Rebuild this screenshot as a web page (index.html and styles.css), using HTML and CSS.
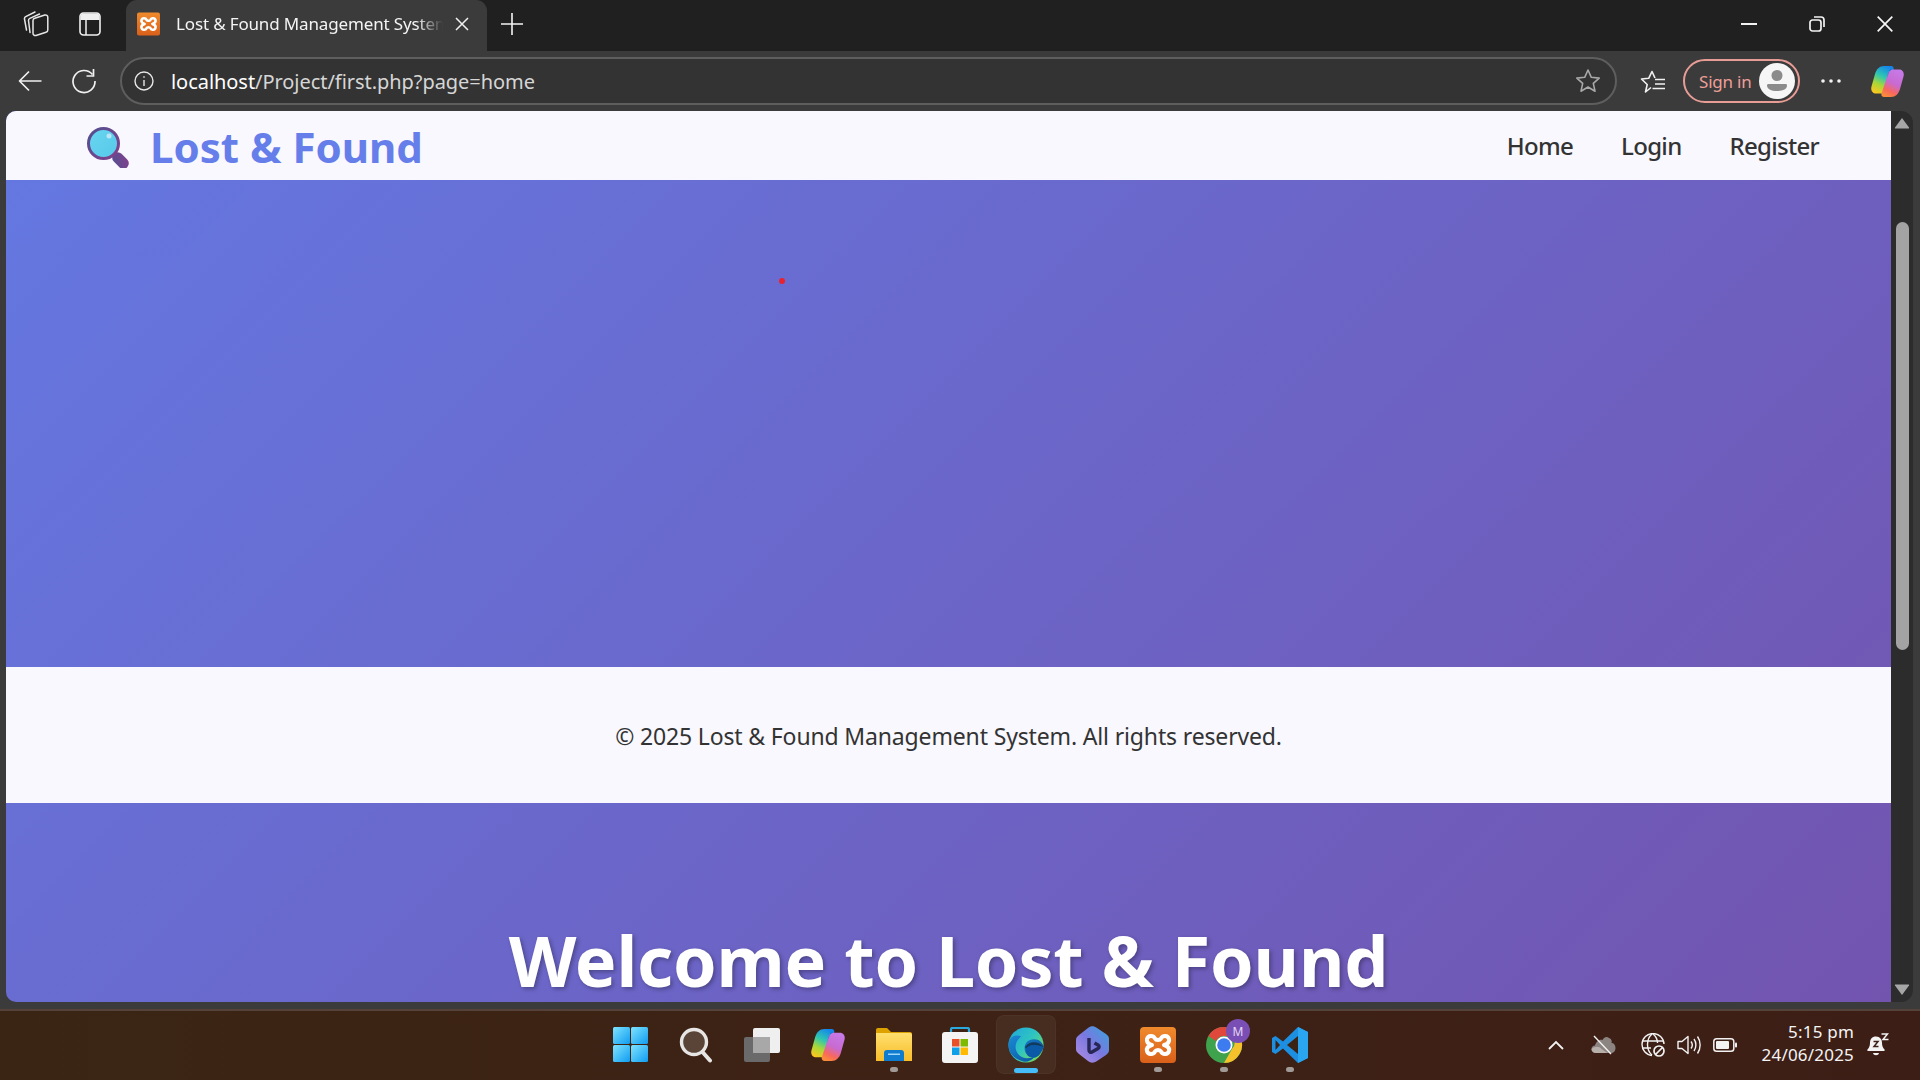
FILE: index.html
```html
<!DOCTYPE html>
<html lang="en">
<head>
<meta charset="utf-8">
<title>Lost &amp; Found Management System</title>
<link rel="stylesheet" href="styles.css">
</head>
<body>
<svg class="defs" width="0" height="0" aria-hidden="true">
  <defs>
    <linearGradient id="gXampp" x1="0" y1="0" x2="0" y2="1"><stop offset="0" stop-color="#f08a2c"/><stop offset="1" stop-color="#d9601a"/></linearGradient>
    <linearGradient id="gWin" x1="0" y1="0" x2="1" y2="1"><stop offset="0" stop-color="#7fe4ff"/><stop offset="1" stop-color="#0f9cf0"/></linearGradient>
    <linearGradient id="gCopA" x1=".7" y1="0" x2=".3" y2="1"><stop offset="0" stop-color="#1585ec"/><stop offset=".4" stop-color="#2fc8b0"/><stop offset=".7" stop-color="#a8d838"/><stop offset="1" stop-color="#f8c820"/></linearGradient>
    <linearGradient id="gCopB" x1=".7" y1="0" x2=".3" y2="1"><stop offset="0" stop-color="#c77ae8"/><stop offset=".5" stop-color="#c86ad0"/><stop offset=".8" stop-color="#f8685c"/><stop offset="1" stop-color="#fb8a3c"/></linearGradient>
    <linearGradient id="gFolder" x1="0" y1="0" x2="0" y2="1"><stop offset="0" stop-color="#ffdf6e"/><stop offset="1" stop-color="#f9bd2a"/></linearGradient>
    <linearGradient id="gEdgeTop" x1="0" y1="0" x2="1" y2=".8"><stop offset="0" stop-color="#1fa6de"/><stop offset=".55" stop-color="#2fc5c0"/><stop offset="1" stop-color="#7fdc50"/></linearGradient>
    <linearGradient id="gEdgeLow" x1="0" y1="0" x2="1" y2="1"><stop offset="0" stop-color="#1b8ad6"/><stop offset="1" stop-color="#0a4f9a"/></linearGradient>
    <linearGradient id="gBing" x1="1" y1="0" x2="0" y2="1"><stop offset="0" stop-color="#38a4dc"/><stop offset=".5" stop-color="#7a78e0"/><stop offset="1" stop-color="#b48ee4"/></linearGradient>
    <linearGradient id="gGlass" x1="0" y1="0" x2="1" y2="1"><stop offset="0" stop-color="#534f92"/><stop offset="1" stop-color="#84408a"/></linearGradient>
    <symbol id="xamppMark" viewBox="0 0 36 36">
      <path d="M15 11.500c-1.500-3.500-7-3.500-8 .5-.7 3 1.500 5 5 6-3.500 1-5.700 3-5 6 1 4 6.500 4 8 .5M15 11.500c1 2 5 2 6 0 1.500-3.500 7-3.500 8 .5.700 3-1.500 5-5 6 3.500 1 5.700 3 5 6-1 4-6.500 4-8 .5-1-2-5-2-6 0" fill="none" stroke="#fff" stroke-width="4" stroke-linecap="round" stroke-linejoin="round"/>
    </symbol>
  </defs>
</svg>

<div class="desktop">
  <header class="tabstrip">
    <div class="strip-icon">
      <svg width="26" height="26" viewBox="0 0 26 26" fill="none" stroke="#e6e6e6" stroke-width="1.500" stroke-linejoin="round" stroke-linecap="round"><path d="M10 9.500c0-1.200.7-2 1.800-2.300l10-3.200c1.500-.4 3 .5 3 2.200V19c0 1.200-.7 2-1.800 2.300l-10 3.200c-1.500.4-3-.5-3-2.200z"/><path d="M7 21.500 5.500 9.500c-.1-1 .4-1.700 1.300-2.100l9.700-4.400"/><path d="M3.500 19 1.500 8c-.2-1 .3-1.800 1.200-2.300L12 1"/></svg>
    </div>
    <div class="strip-icon strip-icon-second">
      <svg width="22" height="24" viewBox="0 0 22 24" fill="none"><rect x="1" y="1" width="20" height="22" rx="3.500" stroke="#f0f0f0" stroke-width="1.600"/><path d="M1.500 8V4.500C1.500 2.500 2.500 1.500 4.500 1.500h13c2 0 3 1 3 3V8z" fill="#f0f0f0"/><path d="M7 8v15" stroke="#f0f0f0" stroke-width="1.500"/></svg>
    </div>
    <div class="tab">
      <svg class="favicon" width="23" height="24" viewBox="0 0 36 36"><rect width="36" height="36" rx="3" fill="url(#gXampp)"/><use href="#xamppMark"/></svg>
      <span class="tab-title">Lost &amp; Found Management System</span>
      <svg class="tab-close" width="14" height="14" viewBox="0 0 14 14" stroke="#f2f2f2" stroke-width="1.500"><path d="M1 1l12 12M13 1 1 13"/></svg>
    </div>
    <div class="new-tab">
      <svg width="22" height="22" viewBox="0 0 22 22" stroke="#f4f4f4" stroke-width="1.600"><path d="M11 0v22M0 11h22"/></svg>
    </div>
    <div class="window-controls">
      <div class="win-btn"><svg width="16" height="2" viewBox="0 0 16 2"><rect width="16" height="2" fill="#f2f2f2"/></svg></div>
      <div class="win-btn"><svg width="16" height="16" viewBox="0 0 16 16" fill="none" stroke="#f2f2f2" stroke-width="1.700"><rect x="1" y="4" width="11" height="11" rx="2.500"/><path d="M5 1h7c2 0 3 1 3 3v7"/></svg></div>
      <div class="win-btn"><svg width="16" height="16" viewBox="0 0 16 16" stroke="#f6f6f6" stroke-width="1.700"><path d="M.7.700l14.600 14.600M15.300.700.700 15.300"/></svg></div>
    </div>
  </header>

  <div class="toolbar">
    <div class="tool-btn">
      <svg width="24" height="24" viewBox="0 0 24 24" fill="none" stroke="#f0f0f0" stroke-width="1.700" stroke-linejoin="round"><path d="M23.500 12H1.500M11 2.500 1.500 12l9.500 9.500"/></svg>
    </div>
    <div class="tool-btn">
      <svg width="26" height="26" viewBox="0 0 26 26" fill="none" stroke="#f0f0f0" stroke-width="1.700"><path d="M21.500 6.500A11 11 0 1 0 24 13"/><path d="M22.500 1v7h-7"/></svg>
    </div>
    <div class="address">
      <svg class="info" width="20" height="20" viewBox="0 0 20 20" fill="none" stroke="#e8e8e8" stroke-width="1.400"><circle cx="10" cy="10" r="9"/><path d="M10 9v6"/><path d="M10 5.300v1.500"/></svg>
      <span class="url"><span class="url-host">localhost</span>/Project/first.php?page=home</span>
      <svg class="star" width="26" height="26" viewBox="0 0 26 26" fill="none" stroke="#a8a8a8" stroke-width="1.600" stroke-linejoin="round"><path d="m13 2 3.300 7.300 7.900.8-5.900 5.300 1.700 7.800L13 19l-7 4.200 1.700-7.800L1.800 10.100l7.900-.8z"/></svg>
    </div>
    <div class="tool-btn fav-btn">
      <svg width="26" height="26" viewBox="0 0 26 26" fill="none" stroke="#f2f2f2" stroke-width="1.600" stroke-linejoin="round"><path d="M11 19.500 5.500 24l1.700-7.500L1.500 11l7.200-.7L12 3.500l3 6.500"/><path d="M15 11.500h10M15 16h10M12.500 20.500h12.500"/></svg>
    </div>
    <div class="signin">
      <span class="signin-text">Sign in</span>
      <svg class="avatar" width="36" height="36" viewBox="0 0 36 36"><circle cx="18" cy="18" r="18" fill="#f6f6f6"/><circle cx="18" cy="12.500" r="5.500" fill="#8b8b8b"/><path d="M9.500 21h17c1 0 1.500.5 1.500 1.500 0 3.500-4 5.500-10 5.500S8 26 8 22.500C8 21.500 8.500 21 9.500 21z" fill="#8b8b8b"/></svg>
    </div>
    <div class="tool-btn dots-btn">
      <svg width="20" height="4" viewBox="0 0 20 4" fill="#f2f2f2"><circle cx="2" cy="2" r="1.800"/><circle cx="10" cy="2" r="1.800"/><circle cx="18" cy="2" r="1.800"/></svg>
    </div>
    <div class="tool-btn copilot-btn">
      <svg width="33" height="31" viewBox="0 0 33 31"><path d="M13 0h7c2 0 3 1.500 2.500 3.500L16 23c-1 3-2.500 4.500-5 4.500H5c-3.500 0-5.500-3-4.500-7L4 8C5.500 3 8.500 0 13 0z" fill="url(#gCopA)"/><path d="M20 31h-7c-2 0-3-1.500-2.500-3.500L17 8c1-3 2.500-4.500 5-4.500h6c3.500 0 5.500 3 4.500 7L29 23c-1.500 5-4.500 8-9 8z" fill="url(#gCopB)"/><path d="M22 3.500c-2.300 0-3.800 1.300-4.800 4L15.500 13 19 3.500z" fill="#0e5fc4"/></svg>
    </div>
  </div>

  <div class="viewport">
    <main class="page">
      <nav class="site-nav">
        <a class="brand">
          <svg class="brand-icon" width="44" height="44" viewBox="0 0 44 44">
            <defs>
              <linearGradient id="gLens" x1="0" y1="0" x2="1" y2="1"><stop offset="0" stop-color="#66d6f0"/><stop offset="1" stop-color="#58c8ea"/></linearGradient>
            </defs>
            <rect x="-5.500" y="-9.500" width="11" height="19" rx="5.500" transform="translate(34.500 36.500) rotate(-45)" fill="url(#gGlass)"/>
            <circle cx="17.500" cy="19.500" r="15" fill="url(#gLens)" stroke="url(#gGlass)" stroke-width="3"/>
            <circle cx="23" cy="12" r="2.500" fill="#bde6f5"/>
          </svg>
          <span class="brand-name">Lost &amp; Found</span>
        </a>
        <ul class="nav-links">
          <li><a>Home</a></li>
          <li><a>Login</a></li>
          <li><a>Register</a></li>
        </ul>
      </nav>
      <section class="hero-empty"><span class="red-dot"></span></section>
      <footer class="site-footer">© 2025 Lost &amp; Found Management System. All rights reserved.</footer>
      <section class="welcome"><h1>Welcome to Lost &amp; Found</h1></section>
    </main>
    <div class="scrollbar">
      <svg class="arrow" width="16" height="12" viewBox="0 0 16 12"><path d="M8 1 15 10.500c.3.600 0 1-.6 1H1.600c-.6 0-.9-.4-.6-1z" fill="#a6a6a6"/></svg>
      <div class="scroll-track"><div class="thumb"></div></div>
      <svg class="arrow" width="16" height="12" viewBox="0 0 16 12"><path d="M8 11 15 1.500c.3-.6 0-1-.6-1H1.600c-.6 0-.9.4-.6 1z" fill="#a6a6a6"/></svg>
    </div>
  </div>

  <footer class="taskbar">
    <div></div>
    <div class="task-icons">
      <div class="task-item">
        <svg width="35" height="35" viewBox="0 0 35 35" fill="url(#gWin)"><rect width="17" height="17" rx="1.500"/><rect x="18" width="17" height="17" rx="1.500"/><rect y="18" width="17" height="17" rx="1.500"/><rect x="18" y="18" width="17" height="17" rx="1.500"/></svg>
      </div>
      <div class="task-item">
        <svg width="34" height="36" viewBox="0 0 34 36" fill="none"><circle cx="15" cy="15" r="12.500" fill="#5a4438" stroke="#e8e6e4" stroke-width="3.400"/><path d="M23.500 25 31 33.500" stroke="#e8e6e4" stroke-width="4" stroke-linecap="round"/></svg>
      </div>
      <div class="task-item">
        <svg width="36" height="34" viewBox="0 0 36 34"><rect x="0" y="9" width="26" height="25" rx="2" fill="#6a6a6a"/><rect x="9" y="0" width="27" height="25" rx="2" fill="#efefef"/><rect x="9" y="9" width="17" height="16" fill="#a8a8a8"/></svg>
      </div>
      <div class="task-item">
        <svg width="34" height="32" viewBox="0 0 33 31"><path d="M13 0h7c2 0 3 1.500 2.500 3.500L16 23c-1 3-2.500 4.500-5 4.500H5c-3.500 0-5.500-3-4.500-7L4 8C5.500 3 8.500 0 13 0z" fill="url(#gCopA)"/><path d="M20 31h-7c-2 0-3-1.500-2.500-3.500L17 8c1-3 2.500-4.500 5-4.500h6c3.500 0 5.500 3 4.500 7L29 23c-1.500 5-4.500 8-9 8z" fill="url(#gCopB)"/><path d="M22 3.500c-2.300 0-3.800 1.300-4.800 4L15.500 13 19 3.500z" fill="#0e5fc4"/></svg>
      </div>
      <div class="task-item">
        <svg width="36" height="33" viewBox="0 0 36 33"><path d="M0 2C0 .8.800 0 2 0h9l4 4h19c1.200 0 2 .8 2 2v6H0z" fill="#dda100"/><path d="M0 5h14l3 0h17c1.200 0 2 .8 2 2v26H0z" fill="url(#gFolder)"/><path d="M8 33V25c0-2 1-3 3-3h14c2 0 3 1 3 3v8z" fill="#0f7cd0"/><rect x="12" y="25.500" width="12" height="1.500" fill="#9fd5f5"/></svg>
        <span class="run-dot"></span>
      </div>
      <div class="task-item">
        <svg width="36" height="36" viewBox="0 0 36 36"><path d="M9 6V2.500c0-1 .5-1.500 1.500-1.500h15c1 0 1.500.5 1.500 1.500V6" fill="none" stroke="#28a9e0" stroke-width="2.200"/><rect y="5" width="36" height="31" rx="3" fill="#f4f4f4"/><rect x="10" y="12" width="7.500" height="7.500" fill="#e8502a"/><rect x="18.500" y="12" width="7.500" height="7.500" fill="#7fb900"/><rect x="10" y="20.500" width="7.500" height="7.500" fill="#10a0ea"/><rect x="18.500" y="20.500" width="7.500" height="7.500" fill="#ffb900"/></svg>
      </div>
      <div class="task-item task-active">
        <svg width="36" height="36" viewBox="0 0 38 38"><circle cx="19" cy="19" r="18.500" fill="url(#gEdgeTop)"/><path d="M37.500 21c0-2.500-3-8-10-8-8 0-12 7-9 14 2 4 5.500 5 9 5-3 4-9 6-13 4C6 33 .5 27 .5 19 .5 17 1 15 2 13c2-4 8-5 12-3-3 2-6 6-6 11 0 6 5 12 12 12 7 0 11-3 13-6 2-2 4-4 4.500-6z" fill="url(#gEdgeLow)"/><path d="M19 26c0-4 3-7 8-7 5 0 9 1 10.500 2-.5 3-3 7-5 9-3 2.500-6 3-8.500 2-3-1-4.500-3.500-4.500-6z" fill="#0a5aa8"/><path d="M18 21c3-4 6-5 9-5 5 0 8 2 10.400 4.500l.1.500C34 19.500 30 19 27 19c-4 0-7 2-8 4z" fill="#123a5c"/></svg>
        <span class="active-bar"></span>
      </div>
      <div class="task-item">
        <svg width="33" height="37" viewBox="0 0 33 37"><path d="M12 2c3-2.500 6-2 9 0l9 6c2 1.500 3 3 3 5v11c0 2-1 3.500-3 5l-9 6c-3 2-6 2.500-9 0l-9-7c-2-1.500-3-3-3-5V14c0-2 1-3.500 3-5z" fill="url(#gBing)"/><path d="M13 12v12c0 2 1.500 2.800 3 2l6-3.500c1.500-1 1.500-2.500 0-3.500l-3.500-2" fill="none" stroke="#272654" stroke-width="3.400" stroke-linejoin="round"/></svg>
      </div>
      <div class="task-item">
        <svg width="36" height="36" viewBox="0 0 36 36"><rect width="36" height="36" rx="4" fill="url(#gXampp)"/><use href="#xamppMark"/></svg>
        <span class="run-dot"></span>
      </div>
      <div class="task-item">
        <svg class="chrome" width="50" height="46" viewBox="0 0 50 46">
          <circle cx="25" cy="23" r="18" fill="#3fa34d"/>
          <path d="M25 5a18 18 0 0 1 15.600 9H25a9 9 0 0 0-8 5L9.400 14A18 18 0 0 1 25 5z" fill="#e0483c"/>
          <path d="M40.600 14A18 18 0 0 1 25 41l8-14a9 9 0 0 0 0-13z" fill="#f5c22c"/>
          <circle cx="25" cy="23" r="8.500" fill="#fff"/><circle cx="25" cy="23" r="6.800" fill="#3d7cf0"/>
          <circle cx="39" cy="9" r="12" fill="#7a4fb5"/>
          <text class="chrome-badge" x="39" y="13.500" text-anchor="middle">M</text>
        </svg>
        <span class="run-dot"></span>
      </div>
      <div class="task-item">
        <svg width="36" height="36" viewBox="0 0 36 36"><path d="M26 0 36 5v26l-10 5L11 21.500 3.500 27 0 25V11l3.500-2L11 14.500z" fill="#1d8fe0"/><path d="M26 9 15 18l11 9z" fill="#3a2315"/><path d="M26 0 36 5v26l-10 5z" fill="#2aa6f0"/><path d="M3.500 13 8 18l-4.500 5z" fill="#3a2315"/></svg>
        <span class="run-dot"></span>
      </div>
    </div>
    <div class="tray">
      <svg class="tray-chevron" width="16" height="10" viewBox="0 0 16 10" fill="none" stroke="#f2f2f2" stroke-width="1.800"><path d="M1 9 8 2l7 7"/></svg>
      <svg class="tray-cloud" width="25" height="20" viewBox="0 0 25 20"><path d="M5 18c-3 0-4.500-2-4.500-4s1.500-3.500 3.500-3.500C5 7 8 4 11.500 5 13 2 16 1 18 3c3 1 3 4 2.500 5 2.500 0 4 2 4 5 0 3-2 5-4.500 5z" fill="#8c8480"/><path d="M5 18c-3 0-4.500-2-4.500-4 3-3 8-3 10 0l6 4z" fill="#b7b0aa"/><path d="M3 1l17 18" stroke="#f2f2f2" stroke-width="1.400"/></svg>
      <svg class="tray-globe" width="24" height="24" viewBox="0 0 24 24" fill="none" stroke="#f2f2f2" stroke-width="1.400"><path d="M11 22.500A11 11 0 1 1 23 11"/><path d="M11 1c-6 5-6 16 0 21M12 1c3 2.500 4.500 6 4.500 9M1 8h21M1 15h9"/><circle cx="18" cy="18" r="5" stroke-width="1.700"/><path d="m14.500 21.500 7-7" stroke-width="1.700"/></svg>
      <svg class="tray-speaker" width="24" height="20" viewBox="0 0 24 20" fill="none" stroke="#f2f2f2" stroke-width="1.400" stroke-linejoin="round"><path d="M1 6.500h4L11 1.500v17l-6-5H1z"/><path d="M14 6.500c1.500 2 1.500 5 0 7M17 4c2.500 3.500 2.500 8.500 0 12M20.500 1.500c3.500 5 3.500 12 0 17"/></svg>
      <svg class="tray-battery" width="24" height="14" viewBox="0 0 24 14" fill="none"><rect x=".8" y=".8" width="20" height="12.400" rx="2.800" stroke="#f2f2f2" stroke-width="1.500"/><rect x="3" y="3" width="13" height="8" rx="1" fill="#f2f2f2"/><rect x="22" y="4.500" width="2" height="5" rx="1" fill="#f2f2f2"/></svg>
      <div class="clock"><span>5:15 pm</span><span>24/06/2025</span></div>
      <svg class="tray-bell" width="22" height="24" viewBox="0 0 22 24"><path d="M9 3.500c-4 0-6 2.500-6 6.500 0 3-1 5-2.500 6.500-.6.800-.2 1.500.8 1.500h15.400c1 0 1.400-.7.800-1.500C16 15 15 13 15 10c0-3.500-2-6.500-6-6.500z" fill="#f4f4f4"/><path d="M6 20h6c-.5 3-5.500 3-6 0z" fill="#f4f4f4"/><path d="M6.500 8.500h4.500l-4 5h4.500" fill="none" stroke="#3d2118" stroke-width="1.500"/><path d="M14.500 1h6l-4.500 5.500h5.500" fill="none" stroke="#f4f4f4" stroke-width="1.500"/></svg>
    </div>
  </footer>
</div>
</body>
</html>
```

FILE: styles.css
```css
* { box-sizing: border-box; }
html, body { margin: 0; height: 100%; overflow: hidden; }
body { font-family: "Noto Sans", "Open Sans", sans-serif; background: #3b3b3b; }
.defs { position: absolute; }
svg { display: block; flex: none; }

.desktop { display: flex; flex-direction: column; height: 1080px; width: 1920px; }

/* tab strip */
.tabstrip { display: flex; align-items: center; height: 51px; flex: none; background: #202020; padding: 0 1px 3px 23px; }
.strip-icon { width: 26px; display: flex; justify-content: center; }
.strip-icon-second { margin-left: 28px; }
.tab { display: flex; align-items: center; width: 361px; height: 51px; margin: 0 0 -3px 23px; padding: 0 17px 3px 11px; background: #3b3b3b; border-radius: 11px 11px 0 0; }
.tab-title { width: 267px; margin: 0 0 2px 16px; font-size: 17px; letter-spacing: -.15px; color: #f4f4f4; white-space: nowrap; overflow: hidden; -webkit-mask-image: linear-gradient(90deg, #000 90%, transparent); mask-image: linear-gradient(90deg, #000 90%, transparent); }
.tab-close { margin-left: 12px; }
.new-tab { margin-left: 14px; }
.window-controls { display: flex; margin-left: auto; }
.win-btn { width: 68px; height: 48px; display: flex; align-items: center; justify-content: center; }

/* toolbar */
.toolbar { display: flex; align-items: center; height: 60px; flex: none; padding: 0 15px 0 12px; background: #3b3b3b; gap: 18px; }
.tool-btn { width: 36px; height: 36px; display: flex; align-items: center; justify-content: center; flex: none; }
.address { display: flex; align-items: center; flex: 1; height: 48px; padding: 0 14px 0 12px; border: 2px solid #5e5e5e; border-radius: 24px; background: #333; }
.info { margin-right: 17px; }
.url { flex: 1; font-size: 20px; letter-spacing: -.05px; color: #d6d6d6; }
.url-host { color: #fff; }
.signin { display: flex; align-items: center; justify-content: space-between; width: 117px; height: 44px; margin-left: -6px; padding: 0 3px 0 14px; border: 2px solid #e79d96; border-radius: 22px; }
.signin-text { font-size: 17px; letter-spacing: -.2px; color: #ee9f97; }
.dots-btn { margin-left: -5px; margin-right: 2px; }

/* content */
.viewport { display: flex; flex: 1; min-height: 0; padding: 0 7px 7px 6px; }
.page { display: flex; flex-direction: column; flex: 1; min-width: 0; border-radius: 10px 0 0 10px; background: linear-gradient(135deg, #6478e2 0%, #764ba2 100%) no-repeat; background-size: 100% 1600px; }
.site-nav { display: flex; align-items: center; justify-content: space-between; height: 69px; flex: none; padding: 0 72px 0 80px; background: #f8f8fe; border-radius: 10px 0 0 0; }
.brand { display: flex; align-items: center; }
.brand-name { margin-left: 20px; padding-top: 2px; font-size: 42px; font-weight: 700; color: #667eea; }
.nav-links { display: flex; gap: 48px; margin: 0; padding: 0; list-style: none; }
.nav-links a { font-size: 24px; font-weight: 500; color: #333; letter-spacing: -.7px; }
.hero-empty { position: relative; height: 487px; flex: none; }
.red-dot { position: absolute; left: 773px; top: 98px; width: 6px; height: 6px; border-radius: 50%; background: #e8222e; }
.site-footer { display: flex; align-items: center; justify-content: center; height: 136px; flex: none; padding-top: 2px; background: #f8f8fe; font-size: 23px; letter-spacing: -.15px; color: #333; }
.welcome { flex: 1; min-height: 0; text-align: center; }
.welcome h1 { margin: 0; padding-top: 122px; font-size: 70px; line-height: 70px; font-weight: 700; color: #fff; letter-spacing: -.2px; white-space: nowrap; text-shadow: 2px 2px 4px rgba(0, 0, 0, .3); }

/* scrollbar */
.scrollbar { display: flex; flex-direction: column; align-items: center; width: 22px; flex: none; padding: 6px 0 6px; background: #2c2c2c; border-radius: 0 12px 12px 0; }
.scroll-track { flex: 1; width: 13px; padding-top: 93px; }
.thumb { height: 428px; background: #a3a3a3; border-radius: 7px; }

/* taskbar */
.taskbar { display: grid; grid-template-columns: 1fr auto 1fr; align-items: center; height: 71px; flex: none; padding-bottom: 2px; border-top: 2px solid #55423a; background: linear-gradient(90deg, #3a2514, #3e2215 50%, #3d1e16); }
.task-icons { display: flex; }
.task-item { position: relative; display: flex; align-items: center; justify-content: center; width: 66px; height: 59px; }
.task-active { width: 60px; margin: 0 3px; background: rgba(255, 255, 255, .05); border-radius: 8px; box-shadow: inset 0 0 0 1px rgba(255, 255, 255, .03); }
.run-dot { position: absolute; left: 29px; bottom: 2px; width: 8px; height: 5px; border-radius: 3px; background: #a19a96; }
.active-bar { position: absolute; left: 18px; bottom: 1px; width: 24px; height: 5px; border-radius: 3px; background: #45bdf8; }
.chrome { overflow: visible; }
.chrome-badge { font-family: "Noto Sans", sans-serif; font-size: 12px; fill: #e4d8f4; }
.tray { display: flex; align-items: center; justify-content: flex-end; padding-right: 31px; }
.tray-cloud { margin-left: 27px; }
.tray-globe { margin-left: 25px; }
.tray-speaker { margin-left: 12px; }
.tray-battery { margin-left: 12px; }
.clock { display: flex; flex-direction: column; align-items: flex-end; margin: 0 0 3px 25px; font-size: 17px; line-height: 23px; letter-spacing: .2px; color: #f4f4f4; }
.tray-bell { margin-left: 13px; }
```
